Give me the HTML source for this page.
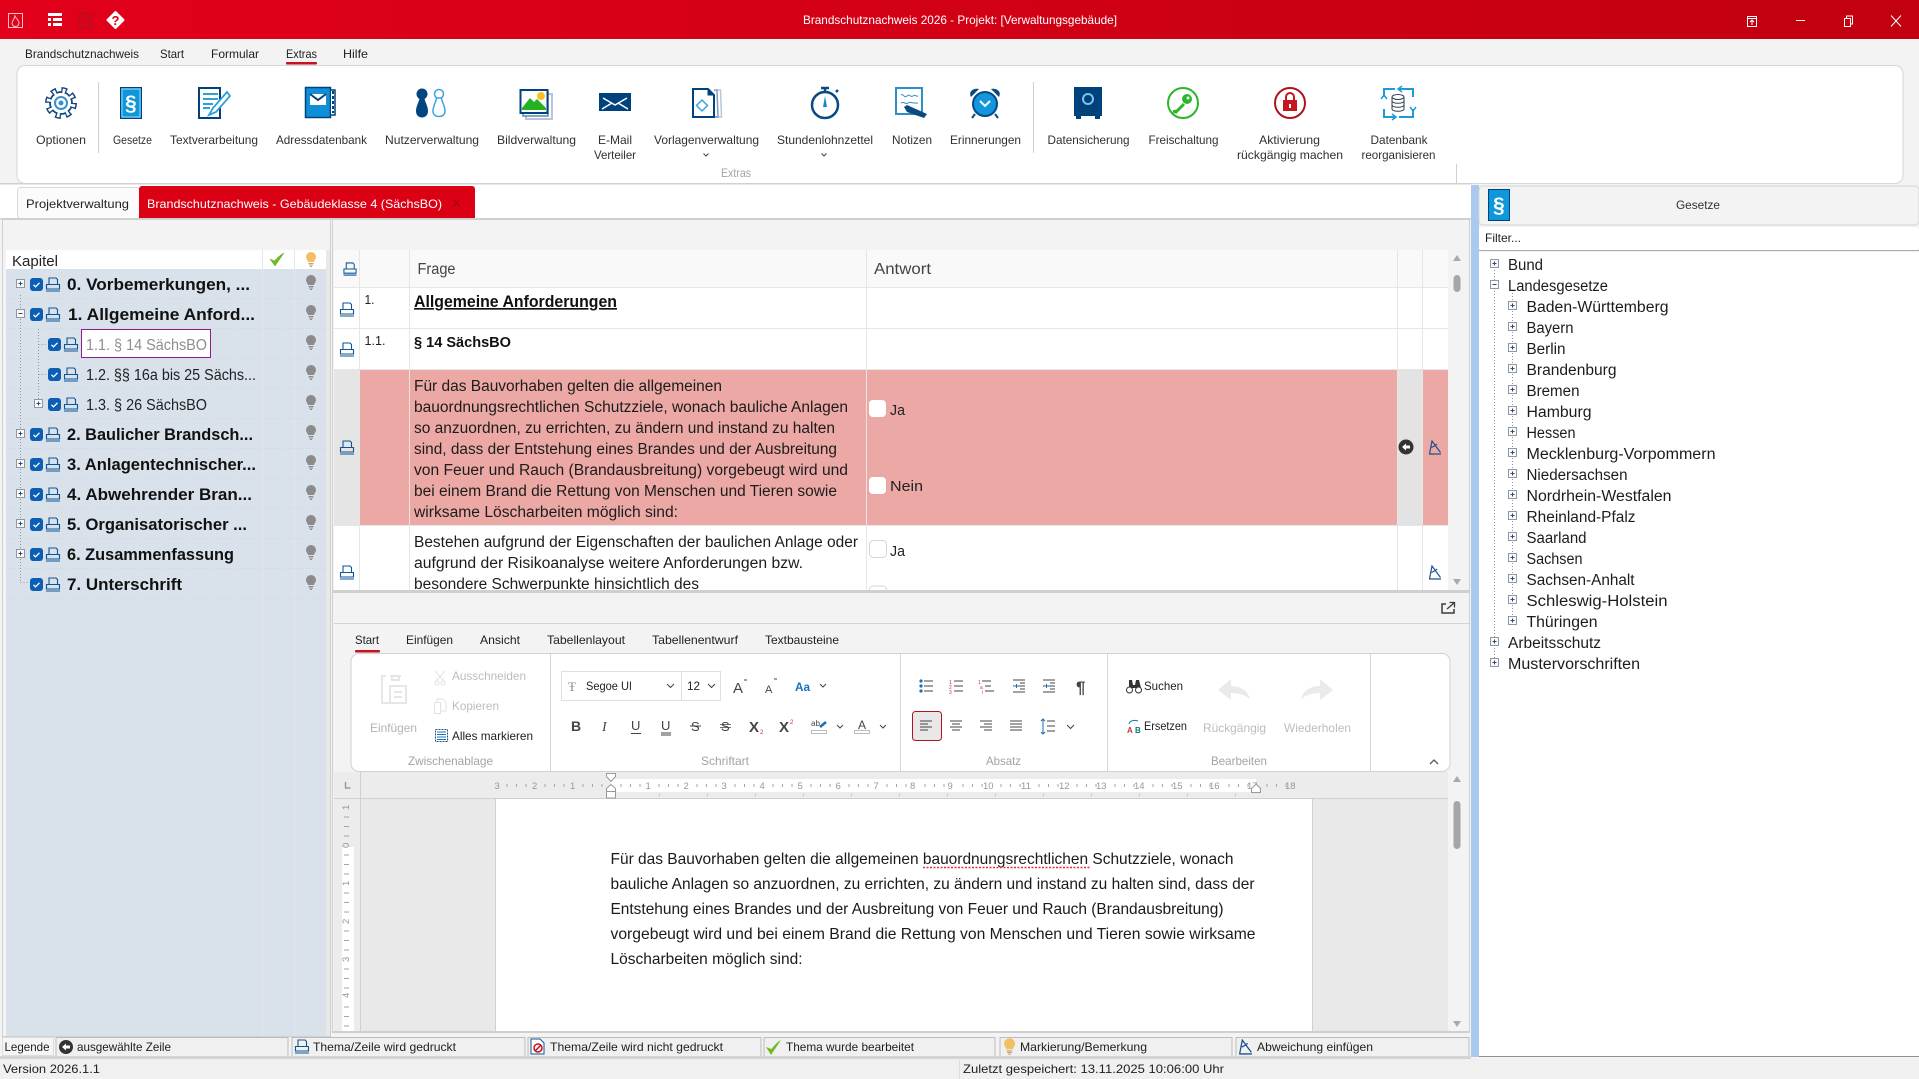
<!DOCTYPE html>
<html lang="de"><head><meta charset="utf-8"><title>Brandschutznachweis 2026</title>
<style>
html,body{margin:0;padding:0;background:#f3f3f3;overflow:hidden}
svg{display:block}
text{font-family:"Liberation Sans",sans-serif;font-size:12px;fill:#262626;white-space:pre}
.r{font-size:12px;fill:#303030}
.m{font-size:15.5px;fill:#1c1c1c}
.b{font-size:17px;font-weight:bold;fill:#111}
.g{font-size:12px;fill:#a3a3a3}
.l{font-size:12px;fill:#1e1e1e}
.n{font-size:9.5px;fill:#969696}
</style></head><body>
<svg xmlns="http://www.w3.org/2000/svg" width="1919" height="1079" viewBox="0 0 1919 1079">
<defs>
<linearGradient id="tb" x1="0" x2="1" y1="0" y2="0"><stop offset="0" stop-color="#e2001a"/><stop offset="1" stop-color="#c2000f"/></linearGradient>
<symbol id="p" viewBox="0 0 16 15"><path d="M4 7.500V1h7l1.500 1.500v5M1.500 7.500h13v4.500h-13zM1 14h14" fill="none" stroke="#0f5596" stroke-width="1.100"/></symbol>
<symbol id="c" viewBox="0 0 13 13"><rect width="13" height="13" rx="3" fill="#0a5fb5"/><path d="M3.500 6.800l2 2 4-4" fill="none" stroke="#fff" stroke-width="1.300"/></symbol>
<symbol id="u" viewBox="0 0 10 15"><path d="M5 0a5 5 0 0 1 5 5c0 2-1.500 3-2 5H2C1.500 8 0 7 0 5a5 5 0 0 1 5-5z" fill="#8b8b8b"/><path d="M2.500 11.500h5M3 13h4M4 14.500h2" stroke="#8b8b8b"/></symbol>
<symbol id="y" viewBox="0 0 10 15"><path d="M5 0a5 5 0 0 1 5 5c0 2-1.500 3-2 5H2C1.500 8 0 7 0 5a5 5 0 0 1 5-5z" fill="#f2c060"/><path d="M2.500 11.500h5M3 13h4M4 14.500h2" stroke="#b9a26d"/></symbol>
<symbol id="x" viewBox="0 0 9 9"><rect x=".5" y=".5" width="8" height="8" fill="#fafafa" stroke="#8f97a3"/><path d="M2.500 4.500h4M4.500 2.500v4" stroke="#324a6a"/></symbol>
<symbol id="w" viewBox="0 0 9 9"><rect x=".5" y=".5" width="8" height="8" fill="#fafafa" stroke="#8f97a3"/><path d="M2.500 4.500h4" stroke="#324a6a"/></symbol>
<symbol id="t" viewBox="0 0 14 15"><path d="M1 14h12M1.500 14L4 1l8.500 11.500M3.500 7.500C6 6.500 8 5 9 4" fill="none" stroke="#21508f" stroke-width="1.200"/></symbol>
</defs>

<rect width="1919" height="1079" fill="#f3f3f3"/>
<!-- title bar -->
<rect width="1919" height="39" fill="url(#tb)"/>
<rect x="8.500" y="13.500" width="14" height="14" fill="none" stroke="#f7c4c8"/>
<path d="M15 16c1 3 4 4 4 7a3.500 3.500 0 0 1-7 0c0-2 2-3 3-7z" fill="none" stroke="#f7c4c8"/>
<rect x="48" y="13" width="14" height="3" fill="#fff"/><rect x="48" y="18" width="3" height="3" fill="#fff"/><rect x="53" y="18" width="9" height="3" fill="#fff"/><rect x="48" y="23" width="3" height="3" fill="#fff"/><rect x="53" y="23" width="9" height="3" fill="#fff"/>
<path d="M79.500 13.500h12v14h-12zM82 14v5h7v-5M82 27v-5h7v5" fill="none" stroke="#ab1320"/>
<path d="M115.500 12l8 8-8 8-8-8z" fill="#fff" stroke="#fff" stroke-linejoin="round" stroke-width="2"/>
<text x="111.500" y="25" style="font-size:13px;font-weight:bold;fill:#dc0015">?</text>
<text x="803" y="24" textLength="314" lengthAdjust="spacingAndGlyphs" style="fill:#fff">Brandschutznachweis 2026 - Projekt: [Verwaltungsgebäude]</text>
<path d="M1747.500 16.500h9v10h-9zM1747.500 18.500h9M1752 25v-5M1750 22l2-2 2 2" fill="none" stroke="#fff"/>
<path d="M1796 20.500h9" stroke="#fff"/>
<path d="M1844.500 18.500h6v8h-6zM1846.500 18v-2h6v8h-2" fill="none" stroke="#fff"/>
<path d="M1891 15.500l10 11M1901 15.500l-10 11" stroke="#fff"/>

<!-- menu -->
<text class="l" x="25" y="58" textLength="114" lengthAdjust="spacingAndGlyphs">Brandschutznachweis</text>
<text class="l" x="160" y="58" textLength="24" lengthAdjust="spacingAndGlyphs">Start</text>
<text class="l" x="211" y="58" textLength="48" lengthAdjust="spacingAndGlyphs">Formular</text>
<text class="l" x="286" y="58" textLength="31" lengthAdjust="spacingAndGlyphs">Extras</text>
<text class="l" x="343" y="58" textLength="25" lengthAdjust="spacingAndGlyphs">Hilfe</text>
<rect x="286" y="62" width="31" height="2.500" rx="1" fill="#c8101e"/>

<!-- ribbon -->
<rect x="17" y="65.500" width="1886" height="118" rx="8" fill="#fff" stroke="#d6d6d6"/>
<path d="M98.500 82v71M1033.500 82v71M1456.500 164v19" stroke="#d0d0d0"/>
<!-- gear -->
<g transform="translate(61,103)" fill="none">
<circle r="12.500" stroke="#12467d" stroke-width="7" stroke-dasharray="5.200 4.617"/>
<circle r="11" stroke="#12467d" stroke-width="1.800"/>
<circle r="10" fill="#fff"/>
<circle r="12" stroke="#fff" stroke-width="5" stroke-dasharray="2.600 6.825" stroke-dashoffset="-1.200"/>
<circle r="6" stroke="#3a90cf" stroke-width="2"/><circle r="2.500" fill="#3a90cf"/></g>
<!-- gesetze -->
<rect x="120.500" y="87.500" width="21" height="31" fill="#0f8fd8" stroke="#00437c" /><rect x="122" y="89" width="18" height="28" fill="#0f97dc" stroke="#fff" stroke-width=".6"/>
<text x="125" y="110" style="font-size:21px;font-weight:bold;fill:#fff">§</text>
<!-- text -->
<path d="M199 88h21v30h-21z" fill="#fff" stroke="#00437c" stroke-width="2"/>
<path d="M203 94h15M203 99h15M203 104h10M203 108h7" stroke="#2f9fd8" stroke-width="2"/>
<path d="M227 92l-14 16-4 7 7-3 14-16z" fill="#fff" stroke="#2f9fd8" stroke-width="1.800"/>
<!-- address -->
<rect x="305.500" y="87.500" width="25" height="30" fill="#0f8fd8" stroke="#00437c" stroke-width="1.500"/>
<path d="M331 90h4v25h-4" fill="#fff" stroke="#00437c" stroke-width="1.500"/><path d="M333 91v22" stroke="#00437c" stroke-width="2" stroke-dasharray="3 2"/>
<rect x="310" y="94" width="16" height="11" fill="#fff"/><path d="M310 94l8 6 8-6" fill="none" stroke="#00437c" stroke-width="2"/>
<!-- users -->
<circle cx="422" cy="94" r="5.500" fill="#00457f"/>
<path d="M419.500 98c0 3-3.500 8-3.500 13 0 4 2.500 6.500 6 6.500s6-2.500 6-6.500c0-5-3.500-10-3.500-13z" fill="#00457f"/>
<circle cx="439" cy="94" r="4.500" fill="#fff" stroke="#3aa4df" stroke-width="1.500"/>
<path d="M436.500 98c0 3-3.500 8-3.500 13 0 3.500 2.500 5.500 6 5.500s6-2 6-5.500c0-5-3.500-10-3.500-13z" fill="#fff" stroke="#3aa4df" stroke-width="1.500"/>
<!-- picture -->
<path d="M526 94h26v25h-26z" fill="#fff" stroke="#b5c4d6" stroke-width="2"/>
<path d="M523 92h25v24h-25z" fill="#fff" stroke="#5f86ad" stroke-width="1.500"/>
<rect x="520.500" y="90" width="27" height="23" fill="#fff" stroke="#00437c" stroke-width="2"/>
<path d="M522 108l8-10 4 4 3-3 9 9v2h-24z" fill="#23b223"/><circle cx="541" cy="96" r="4" fill="#fbbf24"/>
<!-- mail -->
<rect x="599" y="93" width="32" height="18" fill="#00437c"/>
<path d="M603 98l12 7 12-7M602 109l10-6M628 109l-10-6" fill="none" stroke="#fff" stroke-width="1.500"/>
<!-- templates -->
<path d="M718 90h2.500l1 27h-20" fill="none" stroke="#b8c6d8" stroke-width="1.500"/><path d="M714 90h3l1 27h-20" fill="none" stroke="#7e9cbd" stroke-width="1.500"/>
<path d="M693 89h15l6 6v22h-21z" fill="#fff" stroke="#00437c" stroke-width="2"/><path d="M708 89v6h6" fill="#00437c" stroke="#00437c"/>
<path d="M702 100l5.500 5.500-5.500 5.500-5.500-5.500z" fill="none" stroke="#3aa4df" stroke-width="1.500"/>
<!-- stopwatch -->
<circle cx="825" cy="105" r="13" fill="#fff" stroke="#0a4a82" stroke-width="2.500"/>
<path d="M821 88h8M825 88v4M836 92l2-2" stroke="#0a4a82" stroke-width="2.500"/>
<path d="M825 96l2 11h-4z" fill="#1288cf"/>
<!-- notes -->
<rect x="896" y="88" width="26" height="26" fill="#fff" stroke="#2b90c8" stroke-width="2"/>
<path d="M901 95c3-2 3 4 6 1s3 2 6 0 2 1 5 0M901 103c4-2 4 2 7 0s4 1 10 0" fill="none" stroke="#2b90c8"/>
<path d="M904 107l3-2 20 9-3 4-17-6z" fill="#0a4a82"/>
<!-- alarm -->
<circle cx="985" cy="104" r="12" fill="#1296dc" stroke="#0a4a82" stroke-width="2"/>
<path d="M971 97c-3-6 3-9 8-8zM999 97c3-6-3-9-8-8z" fill="#0a4a82"/>
<path d="M975 114l-3 4M995 114l3 4" stroke="#0a4a82" stroke-width="2"/>
<path d="M980 101l5 5 5-5" fill="none" stroke="#fff" stroke-width="2"/>
<!-- safe -->
<rect x="1074" y="87" width="28" height="29" fill="#00437c"/><rect x="1076" y="116" width="5" height="3" fill="#00437c"/><rect x="1095" y="116" width="5" height="3" fill="#00437c"/>
<circle cx="1088" cy="99" r="5" fill="#00437c" stroke="#7ec2e8" stroke-width="2"/>
<!-- key -->
<circle cx="1183" cy="103" r="15" fill="#fff" stroke="#2bb52b" stroke-width="2"/>
<path d="M1175 113l9-9M1175 113l-1-3" stroke="#2bb52b" stroke-width="3"/><circle cx="1187" cy="99" r="5" fill="#2bb52b"/><circle cx="1188" cy="98" r="1.500" fill="#fff"/>
<!-- lock -->
<circle cx="1290" cy="103" r="15" fill="#fff" stroke="#ad141c" stroke-width="2"/>
<path d="M1286 100v-3a4 4 0 0 1 8 0v3" fill="none" stroke="#c4161f" stroke-width="2"/><rect x="1283" y="100" width="14" height="11" fill="#c4161f"/><rect x="1289" y="104" width="2" height="4" fill="#fff"/>
<!-- db reorg -->
<path d="M1398 89h15v8M1413 109v8h-14M1396 117h-12v-8M1384 97v-8h11" fill="none" stroke="#1f9ad8" stroke-width="2"/>
<path d="M1402 86l-4 3 4 3M1392 114l4 3-4 3M1381 99l3-4 3 4M1410 107l3 4 3-4" fill="none" stroke="#1f9ad8" stroke-width="1.500"/>
<ellipse cx="1398" cy="97" rx="6" ry="2.500" fill="#fff" stroke="#30404f"/><path d="M1392 97v12c0 3 12 3 12 0V97M1392 101c0 3 12 3 12 0M1392 105c0 3 12 3 12 0" fill="none" stroke="#30404f"/>
<!-- labels -->
<g class="rl">
<text class="r" x="36" y="144" textLength="50" lengthAdjust="spacingAndGlyphs">Optionen</text>
<text class="r" x="113" y="144" textLength="39" lengthAdjust="spacingAndGlyphs">Gesetze</text>
<text class="r" x="170" y="144" textLength="88" lengthAdjust="spacingAndGlyphs">Textverarbeitung</text>
<text class="r" x="276" y="144" textLength="91" lengthAdjust="spacingAndGlyphs">Adressdatenbank</text>
<text class="r" x="385" y="144" textLength="94" lengthAdjust="spacingAndGlyphs">Nutzerverwaltung</text>
<text class="r" x="497" y="144" textLength="79" lengthAdjust="spacingAndGlyphs">Bildverwaltung</text>
<text class="r" x="598" y="144" textLength="34" lengthAdjust="spacingAndGlyphs">E-Mail</text>
<text class="r" x="594" y="159" textLength="42" lengthAdjust="spacingAndGlyphs">Verteiler</text>
<text class="r" x="654" y="144" textLength="105" lengthAdjust="spacingAndGlyphs">Vorlagenverwaltung</text>
<text class="r" x="777" y="144" textLength="96" lengthAdjust="spacingAndGlyphs">Stundenlohnzettel</text>
<text class="r" x="892" y="144" textLength="40" lengthAdjust="spacingAndGlyphs">Notizen</text>
<text class="r" x="950" y="144" textLength="71" lengthAdjust="spacingAndGlyphs">Erinnerungen</text>
<text class="r" x="1047.500" y="144" textLength="82" lengthAdjust="spacingAndGlyphs">Datensicherung</text>
<text class="r" x="1148.500" y="144" textLength="70" lengthAdjust="spacingAndGlyphs">Freischaltung</text>
<text class="r" x="1259" y="144" textLength="61" lengthAdjust="spacingAndGlyphs">Aktivierung</text>
<text class="r" x="1237" y="159" textLength="106" lengthAdjust="spacingAndGlyphs">rückgängig machen</text>
<text class="r" x="1370.500" y="144" textLength="57" lengthAdjust="spacingAndGlyphs">Datenbank</text>
<text class="r" x="1361.500" y="159" textLength="74" lengthAdjust="spacingAndGlyphs">reorganisieren</text>
</g>
<path d="M703.500 153.500l2.500 2.500 2.500-2.500M821.500 153.500l2.500 2.500 2.500-2.500" fill="none" stroke="#444"/>
<text class="g" x="721" y="177" textLength="30" lengthAdjust="spacingAndGlyphs">Extras</text>

<!-- tab strip -->
<rect x="0" y="184" width="1471" height="34" fill="#fff"/>
<rect x="0" y="183" width="1471" height="1.500" fill="#d0d0d0"/>
<rect x="17.500" y="187.500" width="122" height="31" rx="3" fill="#fbfbfb" stroke="#d8d8d8"/>
<text x="26" y="208" textLength="103" lengthAdjust="spacingAndGlyphs" style="fill:#222">Projektverwaltung</text>
<path d="M139 218v-29a3 3 0 0 1 3-3h330a3 3 0 0 1 3 3v29z" fill="#dc0015"/>
<text x="147" y="208" textLength="295" lengthAdjust="spacingAndGlyphs" style="fill:#fff">Brandschutznachweis - Gebäudeklasse 4 (SächsBO)</text>
<path d="M453.500 199.500l6 7M459.500 199.500l-6 7" stroke="#9c0010" stroke-width="1.100"/>
<rect x="0" y="218" width="1471" height="1.500" fill="#d0d0d0"/>

<!-- left panel -->
<rect x="2.500" y="219.500" width="328" height="817" fill="#f3f3f3" stroke="#cfcfcf"/>
<rect x="6" y="250" width="321" height="19" fill="#fff"/>
<rect x="6" y="269" width="321" height="767" fill="#d9e1eb"/>
<rect x="326" y="250" width="4" height="786" fill="#e8e8e8"/>
<path d="M262.500 250v786M294.500 250v786" stroke="#e3e7ec"/>
<path d="M6 298.500h321M6 328.500h321M6 358.500h321M6 388.500h321M6 418.500h321M6 448.500h321M6 478.500h321M6 508.500h321M6 538.500h321M6 568.500h321M6 598.500h321" stroke="#cdd5df" stroke-dasharray="1 2"/>
<text x="12" y="266" textLength="46" lengthAdjust="spacingAndGlyphs" style="font-size:15px;fill:#222">Kapitel</text>
<path d="M270 259l5 7 9-13c-4 2-7 5-9.500 8z" fill="#6fbb22" stroke="#5fa81c" stroke-width=".5"/>
<use href="#y" x="306" y="252" width="10" height="15"/>
<path d="M20.500 295v288M20.500 582.500h9M38.500 329v76M38.500 344.500h9M38.500 374.500h9" fill="none" stroke="#8e96a2" stroke-dasharray="1 2"/>
<use href="#x" x="16" y="279" width="9" height="9"/><use href="#w" x="16" y="309" width="9" height="9"/><use href="#x" x="34" y="399" width="9" height="9"/>
<use href="#x" x="16" y="429" width="9" height="9"/><use href="#x" x="16" y="459" width="9" height="9"/><use href="#x" x="16" y="489" width="9" height="9"/><use href="#x" x="16" y="519" width="9" height="9"/><use href="#x" x="16" y="549" width="9" height="9"/>
<!-- row icons -->
<g>
<use href="#c" x="30" y="278" width="13" height="13"/><use href="#p" x="45" y="277" width="16" height="15"/>
<use href="#c" x="30" y="308" width="13" height="13"/><use href="#p" x="45" y="307" width="16" height="15"/>
<use href="#c" x="48" y="338" width="13" height="13"/><use href="#p" x="63" y="337" width="16" height="15"/>
<use href="#c" x="48" y="368" width="13" height="13"/><use href="#p" x="63" y="367" width="16" height="15"/>
<use href="#c" x="48" y="398" width="13" height="13"/><use href="#p" x="63" y="397" width="16" height="15"/>
<use href="#c" x="30" y="428" width="13" height="13"/><use href="#p" x="45" y="427" width="16" height="15"/>
<use href="#c" x="30" y="458" width="13" height="13"/><use href="#p" x="45" y="457" width="16" height="15"/>
<use href="#c" x="30" y="488" width="13" height="13"/><use href="#p" x="45" y="487" width="16" height="15"/>
<use href="#c" x="30" y="518" width="13" height="13"/><use href="#p" x="45" y="517" width="16" height="15"/>
<use href="#c" x="30" y="548" width="13" height="13"/><use href="#p" x="45" y="547" width="16" height="15"/>
<use href="#c" x="30" y="578" width="13" height="13"/><use href="#p" x="45" y="577" width="16" height="15"/>
<use href="#u" x="306" y="275" width="10" height="15"/><use href="#u" x="306" y="305" width="10" height="15"/><use href="#u" x="306" y="335" width="10" height="15"/><use href="#u" x="306" y="365" width="10" height="15"/><use href="#u" x="306" y="395" width="10" height="15"/><use href="#u" x="306" y="425" width="10" height="15"/><use href="#u" x="306" y="455" width="10" height="15"/><use href="#u" x="306" y="485" width="10" height="15"/><use href="#u" x="306" y="515" width="10" height="15"/><use href="#u" x="306" y="545" width="10" height="15"/><use href="#u" x="306" y="575" width="10" height="15"/>
</g>
<text class="b" x="67" y="290" textLength="183" lengthAdjust="spacingAndGlyphs">0. Vorbemerkungen, ...</text>
<text class="b" x="68" y="320" textLength="187" lengthAdjust="spacingAndGlyphs">1. Allgemeine Anford...</text>
<rect x="81.500" y="329.500" width="129" height="28" fill="#fff" stroke="#8c1d8c"/>
<text x="86" y="350" textLength="121" lengthAdjust="spacingAndGlyphs" style="font-size:15.500px;fill:#8f8f8f">1.1. § 14 SächsBO</text>
<text x="86" y="380" textLength="170" lengthAdjust="spacingAndGlyphs" style="font-size:15.500px;fill:#222">1.2. §§ 16a bis 25 Sächs...</text>
<text x="86" y="410" textLength="121" lengthAdjust="spacingAndGlyphs" style="font-size:15.500px;fill:#222">1.3. § 26 SächsBO</text>
<text class="b" x="67" y="440" textLength="186" lengthAdjust="spacingAndGlyphs">2. Baulicher Brandsch...</text>
<text class="b" x="67" y="470" textLength="189" lengthAdjust="spacingAndGlyphs">3. Anlagentechnischer...</text>
<text class="b" x="67" y="500" textLength="185" lengthAdjust="spacingAndGlyphs">4. Abwehrender Bran...</text>
<text class="b" x="67" y="530" textLength="180" lengthAdjust="spacingAndGlyphs">5. Organisatorischer ...</text>
<text class="b" x="67" y="560" textLength="167" lengthAdjust="spacingAndGlyphs">6. Zusammenfassung</text>
<text class="b" x="67" y="590" textLength="115" lengthAdjust="spacingAndGlyphs">7. Unterschrift</text>

<!-- question table -->
<rect x="332.500" y="219.500" width="1137" height="372" fill="#f3f3f3" stroke="#cfcfcf"/>
<rect x="334" y="250" width="1114" height="340" fill="#fff"/>
<rect x="334" y="250" width="1114" height="37" fill="#f9f9f9"/>
<rect x="334" y="370" width="26" height="155" fill="#e5e5e5"/>
<rect x="360" y="370" width="1038" height="155" fill="#eca8a5"/>
<rect x="1398" y="370" width="25" height="155" fill="#e3e3e3"/>
<rect x="1423" y="370" width="25" height="155" fill="#eca8a5"/>
<path d="M359.500 250v340M409.500 250v340M866.500 250v340M1397.500 250v340M1422.500 250v340M334 287.500h1114M334 328.500h1114M334 369.500h1114M334 525.500h1114" stroke="#e6e6e6"/>
<rect x="333" y="590" width="1136" height="2" fill="#cfcfcf"/>
<use href="#p" x="342" y="262" width="16" height="14"/><use href="#p" x="339" y="302" width="16" height="15"/><use href="#p" x="339" y="342" width="16" height="15"/><use href="#p" x="339" y="440" width="16" height="15"/><use href="#p" x="339" y="565" width="16" height="15"/>
<text x="417.500" y="274" textLength="38" lengthAdjust="spacingAndGlyphs" style="font-size:15.500px;fill:#444">Frage</text>
<text x="874" y="274" textLength="57" lengthAdjust="spacingAndGlyphs" style="font-size:15.500px;fill:#444">Antwort</text>
<text x="364.500" y="304" textLength="10" lengthAdjust="spacingAndGlyphs" style="font-size:13px;fill:#222">1.</text>
<text x="364.500" y="345" textLength="21" lengthAdjust="spacingAndGlyphs" style="font-size:13px;fill:#222">1.1.</text>
<text x="414" y="307" textLength="203" lengthAdjust="spacingAndGlyphs" style="font-size:16.500px;font-weight:bold;fill:#111;text-decoration:underline">Allgemeine Anforderungen</text>
<text x="414" y="347" textLength="97" lengthAdjust="spacingAndGlyphs" style="font-size:14.500px;font-weight:bold;fill:#111">§ 14 SächsBO</text>
<g>
<text class="m" x="414" y="391" textLength="308" lengthAdjust="spacingAndGlyphs">Für das Bauvorhaben gelten die allgemeinen</text>
<text class="m" x="414" y="412" textLength="434" lengthAdjust="spacingAndGlyphs">bauordnungsrechtlichen Schutzziele, wonach bauliche Anlagen</text>
<text class="m" x="414" y="433" textLength="421" lengthAdjust="spacingAndGlyphs">so anzuordnen, zu errichten, zu ändern und instand zu halten</text>
<text class="m" x="414" y="454" textLength="423" lengthAdjust="spacingAndGlyphs">sind, dass der Entstehung eines Brandes und der Ausbreitung</text>
<text class="m" x="414" y="475" textLength="434" lengthAdjust="spacingAndGlyphs">von Feuer und Rauch (Brandausbreitung) vorgebeugt wird und</text>
<text class="m" x="414" y="496" textLength="423" lengthAdjust="spacingAndGlyphs">bei einem Brand die Rettung von Menschen und Tieren sowie</text>
<text class="m" x="414" y="517" textLength="264" lengthAdjust="spacingAndGlyphs">wirksame Löscharbeiten möglich sind:</text>
<text class="m" x="414" y="547" textLength="444" lengthAdjust="spacingAndGlyphs">Bestehen aufgrund der Eigenschaften der baulichen Anlage oder</text>
<text class="m" x="414" y="568" textLength="389" lengthAdjust="spacingAndGlyphs">aufgrund der Risikoanalyse weitere Anforderungen bzw.</text>
<text class="m" x="414" y="589" textLength="285" lengthAdjust="spacingAndGlyphs">besondere Schwerpunkte hinsichtlich des</text>
</g>
<rect x="334" y="590" width="1114" height="6" fill="#f3f3f3"/>
<rect x="333" y="590" width="1136" height="2" fill="#cfcfcf"/>
<rect x="869" y="400" width="17" height="17" rx="4" fill="#fff"/>
<rect x="869" y="477" width="17" height="17" rx="4" fill="#fff"/>
<rect x="869.500" y="540.500" width="17" height="17" rx="4" fill="#fff" stroke="#d5d5d5"/>
<path d="M869.500 590v-1a4 4 0 0 1 4-3h9a4 4 0 0 1 4 3v1" fill="#fff" stroke="#d5d5d5"/>
<text x="890" y="415" textLength="15" lengthAdjust="spacingAndGlyphs" style="font-size:15px;fill:#222">Ja</text>
<text x="890" y="491" textLength="33" lengthAdjust="spacingAndGlyphs" style="font-size:15px;fill:#222">Nein</text>
<text x="890" y="556" textLength="15" lengthAdjust="spacingAndGlyphs" style="font-size:15px;fill:#222">Ja</text>
<circle cx="1406" cy="447" r="7.500" fill="#333"/><path d="M1402 447l4-3.500v2h4v3h-4v2z" fill="#fff"/>
<use href="#t" x="1428" y="440" width="14" height="15"/><use href="#t" x="1428" y="565" width="14" height="15"/>
<!-- scrollbar -->
<rect x="1448" y="250" width="20" height="340" fill="#f3f3f3"/>
<path d="M1457 255l4 6h-8z" fill="#a9a9a9"/><path d="M1457 585l4-6h-8z" fill="#a9a9a9"/>
<rect x="1453.500" y="275" width="7" height="17" rx="3.500" fill="#a6a6a6"/>

<!-- lower panel -->
<rect x="332.500" y="592.500" width="1137" height="440" fill="#f3f3f3" stroke="#cfcfcf"/>
<path d="M334 623.500h1135" stroke="#d4d4d4"/>
<path d="M1446 604h-4v9h12v-4" fill="none" stroke="#3b3b3b" stroke-width="1.500"/><path d="M1447 609l7-6M1449.500 602.500h5v5" fill="none" stroke="#3b3b3b" stroke-width="1.300"/>
<text class="l" x="355" y="644" textLength="24" lengthAdjust="spacingAndGlyphs">Start</text>
<text class="l" x="406" y="644" textLength="47" lengthAdjust="spacingAndGlyphs">Einfügen</text>
<text class="l" x="480" y="644" textLength="40" lengthAdjust="spacingAndGlyphs">Ansicht</text>
<text class="l" x="547" y="644" textLength="78" lengthAdjust="spacingAndGlyphs">Tabellenlayout</text>
<text class="l" x="652" y="644" textLength="86" lengthAdjust="spacingAndGlyphs">Tabellenentwurf</text>
<text class="l" x="765" y="644" textLength="74" lengthAdjust="spacingAndGlyphs">Textbausteine</text>
<rect x="355" y="650" width="25" height="2.500" rx="1" fill="#c8101e"/>
<rect x="351" y="653.500" width="1099" height="118" rx="8" fill="#fff" stroke="#d2d2d2"/>
<path d="M550.500 654v117M900.500 654v117M1107.500 654v117M1370.500 654v117" stroke="#d6d6d6"/>
<!-- clipboard -->
<path d="M386 676h-4v27h8M390 676h11M392 675v5h7v-5M390 686h16v17h-16zM394 692h8M394 697h8" fill="none" stroke="#e6e6e6" stroke-width="2"/>
<text class="g" x="370" y="732" textLength="47" lengthAdjust="spacingAndGlyphs" style="fill:#b3b3b3">Einfügen</text>
<path d="M435 671l9 10M445 671l-9 10" stroke="#e2e2e2"/><circle cx="437" cy="683" r="2" fill="none" stroke="#e2e2e2"/><circle cx="443" cy="683" r="2" fill="none" stroke="#e2e2e2"/>
<text class="g" x="452" y="680" textLength="74" lengthAdjust="spacingAndGlyphs" style="fill:#bdbdbd">Ausschneiden</text>
<path d="M434.500 702.500h6v11h-6zM437 702v-3h6l3 3v9h-5" fill="none" stroke="#e2e2e2"/>
<text class="g" x="452" y="710" textLength="47" lengthAdjust="spacingAndGlyphs" style="fill:#bdbdbd">Kopieren</text>
<rect x="435.500" y="729.500" width="12" height="12" fill="none" stroke="#234f78" stroke-dasharray="2 1"/><path d="M437 732h9M437 734.500h9M437 737h9M437 739.500h9" stroke="#1d76bd"/>
<text class="l" x="452" y="740" textLength="81" lengthAdjust="spacingAndGlyphs">Alles markieren</text>
<text class="g" x="408" y="765" textLength="85" lengthAdjust="spacingAndGlyphs">Zwischenablage</text>
<text class="g" x="701" y="765" textLength="48" lengthAdjust="spacingAndGlyphs">Schriftart</text>
<text class="g" x="986" y="765" textLength="35" lengthAdjust="spacingAndGlyphs">Absatz</text>
<text class="g" x="1211" y="765" textLength="56" lengthAdjust="spacingAndGlyphs">Bearbeiten</text>
<!-- font combos -->
<rect x="561.500" y="671.500" width="120" height="29" fill="#fff" stroke="#e0e0e0"/><rect x="681.500" y="671.500" width="39" height="29" fill="#fff" stroke="#e0e0e0"/>
<text x="568" y="691" style="font-size:13px;fill:#8c8c8c;font-family:'Liberation Serif',serif">Ŧ</text>
<text x="586" y="690" textLength="46" lengthAdjust="spacingAndGlyphs" style="fill:#222">Segoe UI</text>
<text x="687" y="690" textLength="13" lengthAdjust="spacingAndGlyphs" style="fill:#222">12</text>
<path d="M667 684l3.500 3.500 3.500-3.500M708 684l3.500 3.500 3.500-3.500M820 684l3 3 3-3" fill="none" stroke="#444"/>
<text x="733" y="693" style="font-size:15px;fill:#444">A</text><path d="M744 680h3" stroke="#444"/>
<text x="765" y="693" style="font-size:11px;fill:#444">A</text><path d="M774 679h3" stroke="#444"/>
<text x="795" y="691" textLength="15" lengthAdjust="spacingAndGlyphs" style="font-size:12px;font-weight:bold;fill:#1a6fb8">Aa</text>
<g style="fill:#444">
<text x="571" y="731" style="font-size:14px;font-weight:bold;fill:#444">B</text>
<text x="602" y="731" style="font-size:14px;font-style:italic;fill:#444;font-family:'Liberation Serif',serif">I</text>
<text x="631" y="730" style="font-size:13px;fill:#444">U</text><path d="M631 733.500h10" stroke="#444"/>
<text x="661" y="730" style="font-size:13px;fill:#444">U</text><path d="M661 733h10M661 735h10" stroke="#444"/>
<text x="691" y="731" style="font-size:13px;fill:#444">S</text><path d="M690 726h11" stroke="#444"/>
<text x="721" y="731" style="font-size:13px;fill:#444">S</text><path d="M720 724.500h11M720 727.500h11" stroke="#444" stroke-width=".8"/>
<text x="749" y="732" style="font-size:15px;font-weight:bold;fill:#444">X</text><text x="760" y="734" style="font-size:6px;fill:#c8313c">2</text>
<text x="779" y="732" style="font-size:15px;font-weight:bold;fill:#444">X</text><text x="790" y="724" style="font-size:6px;fill:#c8313c">2</text>
<text x="811" y="726" style="font-size:8px;fill:#444">ab</text><path d="M820 727l6-5" stroke="#1a6fb8" stroke-width="2.500"/><rect x="811.500" y="730.500" width="15" height="3" fill="#fff" stroke="#bbb"/>
<path d="M837 725l3 3 3-3M880 725l3 3 3-3M1067 725l3.500 3.500 3.500-3.500" fill="none" stroke="#444"/>
<text x="858" y="729" style="font-size:12px;fill:#444">A</text><rect x="854.500" y="730.500" width="15" height="3" fill="#fff" stroke="#bbb"/>
</g>
<!-- paragraph icons -->
<circle cx="921" cy="681" r="1.600" fill="#1a6fb8"/><circle cx="921" cy="686" r="1.600" fill="#1a6fb8"/><circle cx="921" cy="691" r="1.600" fill="#1a6fb8"/>
<path d="M924 681h9M924 686h9M924 691h9" stroke="#444"/>
<text x="949" y="684" style="font-size:5px;fill:#c8313c">1</text><text x="949" y="689" style="font-size:5px;fill:#c8313c">2</text><text x="949" y="694" style="font-size:5px;fill:#c8313c">3</text>
<path d="M954 681h9M954 686h9M954 691h9" stroke="#444"/>
<text x="978" y="684" style="font-size:5px;fill:#c8313c">1</text><text x="980" y="689" style="font-size:5px;fill:#c8313c">a</text><text x="982" y="694" style="font-size:5px;fill:#c8313c">i</text>
<path d="M982 681h9M985 686h6M985 691h9" stroke="#444"/>
<path d="M1013 680h12M1020 683h5M1013 686h12M1020 689h5M1013 692h12" stroke="#444"/><path d="M1014 686h5M1016.500 684v4" stroke="#1a6fb8"/>
<path d="M1043 680h12M1050 683h5M1043 686h12M1050 689h5M1043 692h12" stroke="#444"/><path d="M1044 686h5M1046.500 684v4" stroke="#1a6fb8"/>
<text x="1076" y="693" style="font-size:17px;font-weight:bold;fill:#444">¶</text>
<rect x="912.500" y="711.500" width="29" height="29" rx="3" fill="#e8e8e8" stroke="#b3131f"/>
<path d="M920 721h12M920 724h8M920 727h12M920 730h8" stroke="#444"/>
<path d="M950 721h12M952 724h8M950 727h12M952 730h8" stroke="#444"/>
<path d="M980 721h12M984 724h8M980 727h12M984 730h8" stroke="#444"/>
<path d="M1010 721h12M1010 724h12M1010 727h12M1010 730h12" stroke="#444"/>
<path d="M1043 719v15M1041 721l2-2 2 2M1041 732l2 2 2-2" fill="none" stroke="#1a6fb8"/><path d="M1047 721h8M1047 726h8M1047 731h8" stroke="#444"/>
<!-- find -->
<path d="M1129 680h3l1 5h2l1-5h3l2 8h-12z" fill="#333"/><circle cx="1129.500" cy="690" r="3" fill="#fff" stroke="#333"/><circle cx="1138.500" cy="690" r="3" fill="#fff" stroke="#333"/>
<text class="l" x="1144" y="690" textLength="39" lengthAdjust="spacingAndGlyphs">Suchen</text>
<text x="1127" y="733" style="font-size:8px;font-weight:bold;fill:#c8313c">A</text><text x="1135" y="733" style="font-size:8px;font-weight:bold;fill:#0f7a6a">B</text><path d="M1129 724c1-4 6-4 9-3" fill="none" stroke="#1a6fb8"/>
<text class="l" x="1144" y="730" textLength="43" lengthAdjust="spacingAndGlyphs">Ersetzen</text>
<path d="M1218 690l13-11v7c10 0 17 5 19 13-5-4-11-6-19-6v7z" fill="#eaeaea"/>
<path d="M1333 690l-13-11v7c-10 0-17 5-19 13 5-4 11-6 19-6v7z" fill="#eaeaea"/>
<text class="g" x="1203" y="732" textLength="63" lengthAdjust="spacingAndGlyphs" style="fill:#bdbdbd">Rückgängig</text>
<text class="g" x="1284" y="732" textLength="67" lengthAdjust="spacingAndGlyphs" style="fill:#bdbdbd">Wiederholen</text>
<path d="M1430 764l4-4 4 4" fill="none" stroke="#555" stroke-width="1.300"/>

<!-- ruler -->
<rect x="334" y="772" width="1114" height="26" fill="#ececec"/>
<rect x="611" y="779" width="645" height="13" fill="#fff"/>
<path d="M334 798.500h1114M360.500 772v259" stroke="#d0d0d0"/>
<path d="M345.500 782v6h5" fill="none" stroke="#9a9a9a" stroke-width="1.500"/>
<path d="M497 785.500h800" stroke="#a5a5a5" stroke-width="3" stroke-dasharray="0 9.500 1 8.500 1 8.500 1 8.500"/>
<path d="M659 795h580" stroke="#c8c8c8" stroke-width="3" stroke-dasharray="1 47"/>
<g class="rn">
<text class="n" x="494.500" y="789">3</text><text class="n" x="532" y="789">2</text><text class="n" x="570" y="789">1</text>
<text class="n" x="645.500" y="789">1</text><text class="n" x="683.500" y="789">2</text><text class="n" x="721.500" y="789">3</text><text class="n" x="759.500" y="789">4</text><text class="n" x="797.500" y="789">5</text><text class="n" x="835.500" y="789">6</text><text class="n" x="873.500" y="789">7</text><text class="n" x="910" y="789">8</text><text class="n" x="947.500" y="789">9</text>
<text class="n" x="983" y="789">10</text><text class="n" x="1021" y="789">11</text><text class="n" x="1059" y="789">12</text><text class="n" x="1096" y="789">13</text><text class="n" x="1134" y="789">14</text><text class="n" x="1172" y="789">15</text><text class="n" x="1209" y="789">16</text><text class="n" x="1247" y="789">17</text><text class="n" x="1285" y="789">18</text>
</g>
<path d="M606.500 773.500h9v3l-4.500 5-4.500-5z" fill="#fff" stroke="#999"/>
<path d="M606.500 791.500v-3l4.500-4 4.500 4v3zM606.500 791.500h9v6.500h-9z" fill="#fff" stroke="#999"/>
<path d="M1251.500 792.500v-4l4.500-4.500 4.500 4.500v4z" fill="#fff" stroke="#999"/>

<!-- vertical ruler + doc -->
<rect x="334" y="799" width="26" height="232" fill="#ececec"/>
<rect x="342" y="847" width="12" height="184" fill="#fff"/>
<path d="M346.500 807v224" stroke="#a5a5a5" stroke-width="5" stroke-dasharray="0 9.500 1 8.500 1 8.500 1 8.500"/>
<text class="n" transform="translate(349,810) rotate(-90)">1</text><text class="n" transform="translate(349,848) rotate(-90)">0</text><text class="n" transform="translate(349,886) rotate(-90)">1</text><text class="n" transform="translate(349,924) rotate(-90)">2</text><text class="n" transform="translate(349,962) rotate(-90)">3</text><text class="n" transform="translate(349,998) rotate(-90)">4</text>
<rect x="361" y="799" width="135" height="232" fill="#e9e9e9"/>
<rect x="496" y="799" width="817" height="232" fill="#fff"/>
<rect x="1313" y="799" width="135" height="232" fill="#e9e9e9"/>
<path d="M495.500 799v232M1312.500 799v232" stroke="#d0d0d0"/>
<text x="610.500" y="864" textLength="623" lengthAdjust="spacingAndGlyphs" style="font-size:16px;fill:#1a1a1a">Für das Bauvorhaben gelten die allgemeinen bauordnungsrechtlichen Schutzziele, wonach</text>
<text x="610.500" y="889" textLength="644" lengthAdjust="spacingAndGlyphs" style="font-size:16px;fill:#1a1a1a">bauliche Anlagen so anzuordnen, zu errichten, zu ändern und instand zu halten sind, dass der</text>
<text x="610.500" y="914" textLength="613" lengthAdjust="spacingAndGlyphs" style="font-size:16px;fill:#1a1a1a">Entstehung eines Brandes und der Ausbreitung von Feuer und Rauch (Brandausbreitung)</text>
<text x="610.500" y="939" textLength="645" lengthAdjust="spacingAndGlyphs" style="font-size:16px;fill:#1a1a1a">vorgebeugt wird und bei einem Brand die Rettung von Menschen und Tieren sowie wirksame</text>
<text x="610.500" y="964" textLength="192" lengthAdjust="spacingAndGlyphs" style="font-size:16px;fill:#1a1a1a">Löscharbeiten möglich sind:</text>
<path d="M923 867.500h168" stroke="#d33" stroke-width="1.500" stroke-dasharray="2 1.500"/>
<rect x="1448" y="772" width="21" height="259" fill="#f3f3f3"/>
<path d="M1457 776l4 6h-8z" fill="#a9a9a9"/><path d="M1457 1027l4-6h-8z" fill="#a9a9a9"/>
<rect x="1453.500" y="801" width="7" height="48" rx="3.500" fill="#a6a6a6"/>
<rect x="333" y="1031" width="1137" height="2" fill="#cfcfcf"/>

<!-- legend -->
<rect x="2.500" y="1037.500" width="51" height="18" fill="#f5f5f5" stroke="#dcdcdc"/>
<path d="M56 1056v-18.500h232v18.500M292 1056v-18.500h233v18.500M528 1056v-18.500h233v18.500M764 1056v-18.500h231v18.500M1000 1056v-18.500h232v18.500M1236 1056v-18.500h233v18.500" fill="#f0f0f0" stroke="#bdbdbd"/>
<rect x="0" y="1056" width="1471" height="3" fill="#d4d4d4"/>
<text class="l" x="4.500" y="1051" textLength="45" lengthAdjust="spacingAndGlyphs">Legende</text>
<circle cx="66" cy="1047" r="7" fill="#333"/><path d="M62 1047l4-3.500v2h4v3h-4v2z" fill="#fff"/>
<text class="l" x="77" y="1051" textLength="94" lengthAdjust="spacingAndGlyphs">ausgewählte Zeile</text>
<use href="#p" x="294" y="1039" width="16" height="15"/>
<text class="l" x="313" y="1051" textLength="143" lengthAdjust="spacingAndGlyphs">Thema/Zeile wird gedruckt</text>
<path d="M531 1039h9l4 4v11h-13z" fill="#fff" stroke="#0f5596"/><circle cx="538" cy="1048" r="4" fill="none" stroke="#c8101e" stroke-width="1.500"/><path d="M535 1051l6-6" stroke="#c8101e" stroke-width="1.500"/>
<text class="l" x="550" y="1051" textLength="173" lengthAdjust="spacingAndGlyphs">Thema/Zeile wird nicht gedruckt</text>
<path d="M766 1047l5 8 10-15c-4 2-7 6-9.500 9z" fill="#6fbb22"/>
<text class="l" x="786" y="1051" textLength="128" lengthAdjust="spacingAndGlyphs">Thema wurde bearbeitet</text>
<use href="#y" x="1004" y="1038" width="11" height="17"/>
<text class="l" x="1020" y="1051" textLength="127" lengthAdjust="spacingAndGlyphs">Markierung/Bemerkung</text>
<use href="#t" x="1238" y="1039" width="15" height="16"/>
<text class="l" x="1257" y="1051" textLength="116" lengthAdjust="spacingAndGlyphs">Abweichung einfügen</text>

<!-- right pane -->
<rect x="1471" y="185" width="8" height="872" fill="#a9c9ee"/>
<rect x="1479" y="186" width="440" height="39" rx="4" fill="#f3f3f3" stroke="#d6d6d6"/>
<rect x="1488.500" y="189.500" width="21" height="31" fill="#0f97dc" stroke="#00437c"/>
<text x="1493" y="212" style="font-size:21px;font-weight:bold;fill:#fff">§</text>
<text class="l" x="1676" y="209" textLength="44" lengthAdjust="spacingAndGlyphs" style="fill:#333">Gesetze</text>
<rect x="1479" y="227" width="440" height="23" rx="3" fill="#fff"/>
<path d="M1479 250.500h440" stroke="#a8a8a8"/>
<text class="l" x="1485" y="242" textLength="36" lengthAdjust="spacingAndGlyphs">Filter...</text>
<rect x="1479" y="252" width="440" height="804" fill="#fff"/>
<path d="M1479 1056.500h440" stroke="#8f8f8f"/>
<path d="M1494.500 270v393M1512.500 290v331" stroke="#8e96a2" stroke-dasharray="1 2" fill="none"/>
<g>
<use href="#x" x="1490" y="259" width="9" height="9"/><use href="#w" x="1490" y="280" width="9" height="9"/>
<use href="#x" x="1508" y="301" width="9" height="9"/><use href="#x" x="1508" y="322" width="9" height="9"/><use href="#x" x="1508" y="343" width="9" height="9"/><use href="#x" x="1508" y="364" width="9" height="9"/><use href="#x" x="1508" y="385" width="9" height="9"/><use href="#x" x="1508" y="406" width="9" height="9"/><use href="#x" x="1508" y="427" width="9" height="9"/><use href="#x" x="1508" y="448" width="9" height="9"/><use href="#x" x="1508" y="469" width="9" height="9"/><use href="#x" x="1508" y="490" width="9" height="9"/><use href="#x" x="1508" y="511" width="9" height="9"/><use href="#x" x="1508" y="532" width="9" height="9"/><use href="#x" x="1508" y="553" width="9" height="9"/><use href="#x" x="1508" y="574" width="9" height="9"/><use href="#x" x="1508" y="595" width="9" height="9"/><use href="#x" x="1508" y="616" width="9" height="9"/>
<use href="#x" x="1490" y="637" width="9" height="9"/><use href="#x" x="1490" y="658" width="9" height="9"/>
</g>
<g>
<text class="m" x="1508" y="270" textLength="35" lengthAdjust="spacingAndGlyphs">Bund</text>
<text class="m" x="1508" y="291" textLength="100" lengthAdjust="spacingAndGlyphs">Landesgesetze</text>
<text class="m" x="1526.500" y="312" textLength="142" lengthAdjust="spacingAndGlyphs">Baden-Württemberg</text>
<text class="m" x="1526.500" y="333" textLength="47" lengthAdjust="spacingAndGlyphs">Bayern</text>
<text class="m" x="1526.500" y="354" textLength="39" lengthAdjust="spacingAndGlyphs">Berlin</text>
<text class="m" x="1526.500" y="375" textLength="90" lengthAdjust="spacingAndGlyphs">Brandenburg</text>
<text class="m" x="1526.500" y="396" textLength="53" lengthAdjust="spacingAndGlyphs">Bremen</text>
<text class="m" x="1526.500" y="417" textLength="65" lengthAdjust="spacingAndGlyphs">Hamburg</text>
<text class="m" x="1526.500" y="438" textLength="49" lengthAdjust="spacingAndGlyphs">Hessen</text>
<text class="m" x="1526.500" y="459" textLength="189" lengthAdjust="spacingAndGlyphs">Mecklenburg-Vorpommern</text>
<text class="m" x="1526.500" y="480" textLength="101" lengthAdjust="spacingAndGlyphs">Niedersachsen</text>
<text class="m" x="1526.500" y="501" textLength="145" lengthAdjust="spacingAndGlyphs">Nordrhein-Westfalen</text>
<text class="m" x="1526.500" y="522" textLength="109" lengthAdjust="spacingAndGlyphs">Rheinland-Pfalz</text>
<text class="m" x="1526.500" y="543" textLength="60" lengthAdjust="spacingAndGlyphs">Saarland</text>
<text class="m" x="1526.500" y="564" textLength="56" lengthAdjust="spacingAndGlyphs">Sachsen</text>
<text class="m" x="1526.500" y="585" textLength="108" lengthAdjust="spacingAndGlyphs">Sachsen-Anhalt</text>
<text class="m" x="1526.500" y="606" textLength="141" lengthAdjust="spacingAndGlyphs">Schleswig-Holstein</text>
<text class="m" x="1526.500" y="627" textLength="71" lengthAdjust="spacingAndGlyphs">Thüringen</text>
<text class="m" x="1508" y="648" textLength="93" lengthAdjust="spacingAndGlyphs">Arbeitsschutz</text>
<text class="m" x="1508" y="669" textLength="132" lengthAdjust="spacingAndGlyphs">Mustervorschriften</text>
</g>

<!-- status -->
<rect x="0" y="1059" width="1919" height="20" fill="#f0f0f0"/>
<path d="M959.500 1060v19" stroke="#dcdcdc"/>
<text class="l" x="3" y="1073" textLength="97" lengthAdjust="spacingAndGlyphs">Version 2026.1.1</text>
<text class="l" x="963" y="1073" textLength="261" lengthAdjust="spacingAndGlyphs">Zuletzt gespeichert: 13.11.2025 10:06:00 Uhr</text>
</svg>
</body></html>
